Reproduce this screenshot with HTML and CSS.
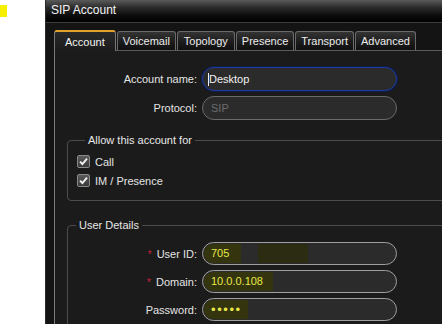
FILE: index.html
```html
<!DOCTYPE html>
<html>
<head>
<meta charset="utf-8">
<link rel="stylesheet" href="styles.css">
</head>
<body>
<div class="page">
  <div class="gutter"><div class="mark"></div></div>
  <div class="window">
    <div class="titlebar">SIP Account</div>
    <div class="client">
      <div class="tabs">
        <div class="tab active">Account</div>
        <div class="tab">Voicemail</div>
        <div class="tab">Topology</div>
        <div class="tab">Presence</div>
        <div class="tab">Transport</div>
        <div class="tab">Advanced</div>
      </div>
      <div class="pane">
        <div class="form form-top">
          <div class="label">Account name:</div>
          <div class="field focus"><span class="caret"></span>Desktop</div>
          <div class="label">Protocol:</div>
          <div class="field disabled">SIP</div>
        </div>
        <fieldset class="group group-allow">
          <legend>Allow this account for</legend>
          <div class="check"><span class="box"><svg width="11" height="11" viewBox="0 0 11 11"><path d="M2 5.6 L4.4 8 L9 2.6" fill="none" stroke="#f2f2f2" stroke-width="1.9"/></svg></span>Call</div>
          <div class="check"><span class="box"><svg width="11" height="11" viewBox="0 0 11 11"><path d="M2 5.6 L4.4 8 L9 2.6" fill="none" stroke="#f2f2f2" stroke-width="1.9"/></svg></span>IM / Presence</div>
        </fieldset>
        <fieldset class="group group-user">
          <legend>User Details</legend>
          <div class="form form-user">
            <div class="label"><span class="req">*</span>User ID:</div>
            <div class="field value"><span class="hl hl-id">705</span><span class="smudge"></span></div>
            <div class="label"><span class="req">*</span>Domain:</div>
            <div class="field value"><span class="hl hl-domain">10.0.0.108</span></div>
            <div class="label">Password:</div>
            <div class="field value"><span class="hl hl-pass">•••••</span></div>
          </div>
        </fieldset>
      </div>
    </div>
  </div>
</div>
</body>
</html>
```

FILE: styles.css
```css
html, body {
  margin: 0;
  padding: 0;
  background: #ffffff;
  overflow: hidden;
}
body {
  width: 442px;
  height: 324px;
  font-family: "Liberation Sans", Arial, sans-serif;
  font-size: 11px;
  color: #e4e4e4;
}
.page {
  display: flex;
  height: 324px;
  overflow: hidden;
}
.gutter {
  width: 45px;
  flex: none;
  background: #fff;
}
.mark {
  margin-top: 5px;
  width: 7px;
  height: 12px;
  background: #f6f000;
}
.window {
  flex: 1;
  min-width: 0;
  height: 324px;
  overflow: hidden;
  background: #141414;
  border-left: 1px solid #2a2a2a;
  display: flex;
  flex-direction: column;
}
.titlebar {
  flex: none;
  height: 22px;
  line-height: 21px;
  padding-left: 5px;
  font-size: 12px;
  color: #f4f4f4;
  background: linear-gradient(#5a5a5a 0%, #2a2a2a 35%, #0c0c0c 70%, #000 100%);
  border-bottom: 1px solid #3c3c3c;
}
.client {
  flex: 1;
  min-height: 0;
  padding: 7px 0 0 8px;
  display: flex;
  flex-direction: column;
}
.tabs {
  flex: none;
  display: flex;
  height: 20px;
  align-items: flex-end;
  position: relative;
  z-index: 1;
}
.tab {
  box-sizing: border-box;
  height: 19px;
  min-width: 58px;
  padding: 0 5px;
  margin-right: 1px;
  line-height: 19px;
  text-align: center;
  color: #ececec;
  background: linear-gradient(#343434, #1a1a1a 60%, #101010);
  border: 1px solid #6a6a6a;
  border-bottom: none;
  border-radius: 3px 3px 0 0;
}
.tab.active {
  height: 21px;
  margin-bottom: -1px;
  padding: 0 10px;
  line-height: 20px;
  border-top: 2px solid #e3a22c;
  border-color: #e3a22c #777 transparent #777;
  background: linear-gradient(#2a2a2a, #1b1b1b);
  color: #f4f4f4;
}
.pane {
  flex: 1;
  min-height: 0;
  margin-right: -80px;
  overflow: hidden;
  background: #1b1b1b;
  border-top: 1px solid #5a5a5a;
  border-left: 1px solid #7a7a7a;
  display: flex;
  flex-direction: column;
}
.form {
  display: grid;
  column-gap: 5px;
  align-items: center;
}
.form-top {
  margin-top: 16px;
  grid-template-columns: 142px 195px;
  grid-auto-rows: 24px;
  row-gap: 5px;
}
.form-user {
  grid-template-columns: 129px 195px;
  grid-auto-rows: 23px;
  row-gap: 5px;
}
.label {
  text-align: right;
  color: #e4e4e4;
}
.req {
  color: #c0203a;
  margin-right: 5px;
}
.field {
  box-sizing: border-box;
  height: 100%;
  border: 1px solid #8c8c8c;
  border-radius: 12px;
  background: #2b2b2b;
  display: flex;
  align-items: center;
  padding-left: 5px;
  color: #f2f2f2;
}
.field.focus {
  border-color: #1e3c9c;
  box-shadow: 0 0 0 1px #0e1c4a;
}
.caret {
  width: 1px;
  height: 13px;
  background: #f0f0f0;
}
.field.disabled {
  border-color: #6a6a6a;
  color: #6c6c6c;
  padding-left: 8px;
}
.field.value {
  padding-left: 1px;
  border-color: #a0a0a0;
}
.hl {
  color: #e8e84a;
  background: #34340e;
  height: 19px;
  line-height: 19px;
  border-radius: 9px 0 0 9px;
  padding-left: 7px;
}
.hl-id { padding-right: 12px; }
.hl-domain { padding-right: 10px; }
.hl-pass {
  padding-right: 6px;
  font-size: 13px;
  letter-spacing: 1.6px;
}
.smudge {
  width: 50px;
  height: 19px;
  margin-left: 17px;
  background: #2c2c12;
}
.group {
  flex: none;
  margin: 14px 0 0 12px;
  padding: 0;
  border: 1px solid #4c4c4c;
  border-radius: 4px;
  min-width: 0;
}
.group legend {
  margin-left: 8px;
  padding: 0 3px;
  line-height: 13px;
  color: #e8e8e8;
}
.group-allow {
  padding: 5px 0 10px 9px;
}
.group-user {
  margin-top: 18px;
  padding: 10px 0 20px 0;
}
.check {
  display: flex;
  align-items: center;
  height: 19px;
}
.box {
  box-sizing: border-box;
  width: 13px;
  height: 13px;
  margin-right: 5px;
  border: 1px solid #8a8a8a;
  border-radius: 2px;
  background: linear-gradient(#5a5a5a, #3a3a3a);
  display: flex;
  align-items: center;
  justify-content: center;
}
```
